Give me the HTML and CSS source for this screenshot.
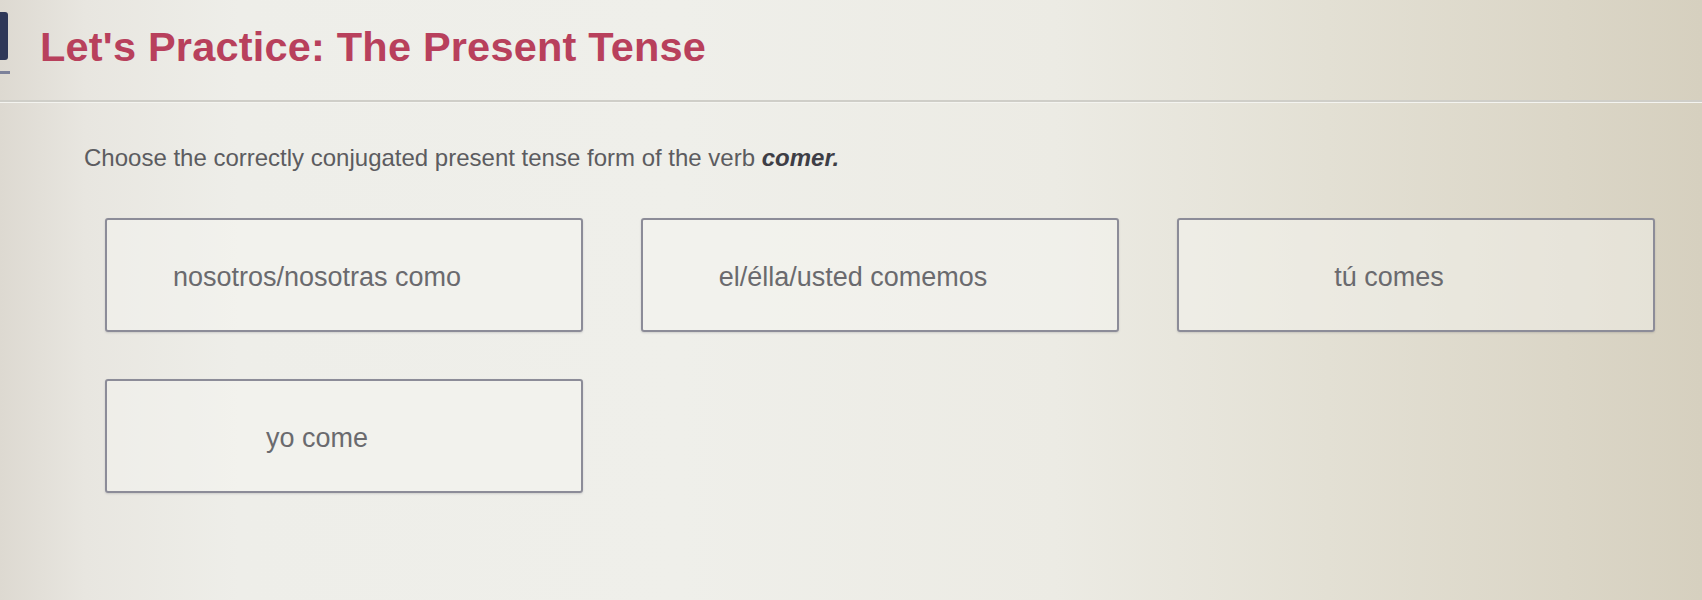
FILE: index.html
```html
<!DOCTYPE html>
<html lang="en">
<head>
<meta charset="utf-8">
<title>Let's Practice: The Present Tense</title>
<link rel="stylesheet" href="styles.css">
</head>
<body>
<div class="page">
  <header class="header">
    <div class="marker">
      <span class="marker-bar"></span>
      <span class="marker-line"></span>
    </div>
    <h1 class="title">Let's Practice: The Present Tense</h1>
  </header>
  <div class="rule"></div>
  <main class="content">
    <p class="prompt">Choose the correctly conjugated present tense form of the verb <b class="verb">comer.</b></p>
    <div class="options">
      <div class="option"><span>nosotros/nosotras como</span></div>
      <div class="option"><span>el/élla/usted comemos</span></div>
      <div class="option"><span>tú comes</span></div>
      <div class="option"><span>yo come</span></div>
    </div>
  </main>
</div>
</body>
</html>
```

FILE: styles.css
```css
html, body {
  margin: 0;
  padding: 0;
}

body {
  width: 1702px;
  height: 600px;
  overflow: hidden;
  font-family: "Liberation Sans", Arial, sans-serif;
  background: linear-gradient(to right,
    #ddd9d1 0%,
    #e8e6e0 5%,
    #eeeee9 14%,
    #efefea 40%,
    #ecebe4 62%,
    #e3e0d4 78%,
    #dbd6c7 92%,
    #d6d0bf 100%);
}

.page {
  display: flex;
  flex-direction: column;
  height: 600px;
}

.header {
  display: flex;
  align-items: flex-start;
  height: 100px;
}

.marker {
  display: flex;
  flex-direction: column;
  gap: 11px;
  padding-top: 12px;
  width: 40px;
  flex-shrink: 0;
}

.marker-bar {
  display: block;
  width: 8px;
  height: 48px;
  background: #2f3858;
  border-radius: 0 3px 3px 0;
}

.marker-line {
  display: block;
  width: 10px;
  height: 3px;
  background: #7c819a;
}

.title {
  margin: 24px 0 0 0;
  font-size: 41.5px;
  line-height: 46px;
  font-weight: bold;
  color: #b8405c;
  letter-spacing: 0.2px;
}

.rule {
  height: 2px;
  background: #cfcec8;
  border-bottom: 1px solid #f4f4f0;
}

.content {
  padding: 41px 0 0 84px;
}

.prompt {
  margin: 0;
  font-size: 24px;
  line-height: 28px;
  color: #5c5c60;
}

.verb {
  font-style: italic;
  font-weight: bold;
  color: #3e3e46;
}

.options {
  display: grid;
  grid-template-columns: repeat(3, 478px);
  column-gap: 58px;
  row-gap: 47px;
  margin: 46px 0 0 21px;
}

.option {
  height: 114px;
  box-sizing: border-box;
  border: 2px solid #8c8c98;
  border-radius: 3px;
  background: rgba(246, 246, 242, 0.45);
  box-shadow: 0 1px 2px rgba(60, 60, 70, 0.18);
  display: flex;
  align-items: center;
  justify-content: center;
  padding: 4px 54px 0 0;
  font-size: 27px;
  color: #6a6a6e;
}
```
